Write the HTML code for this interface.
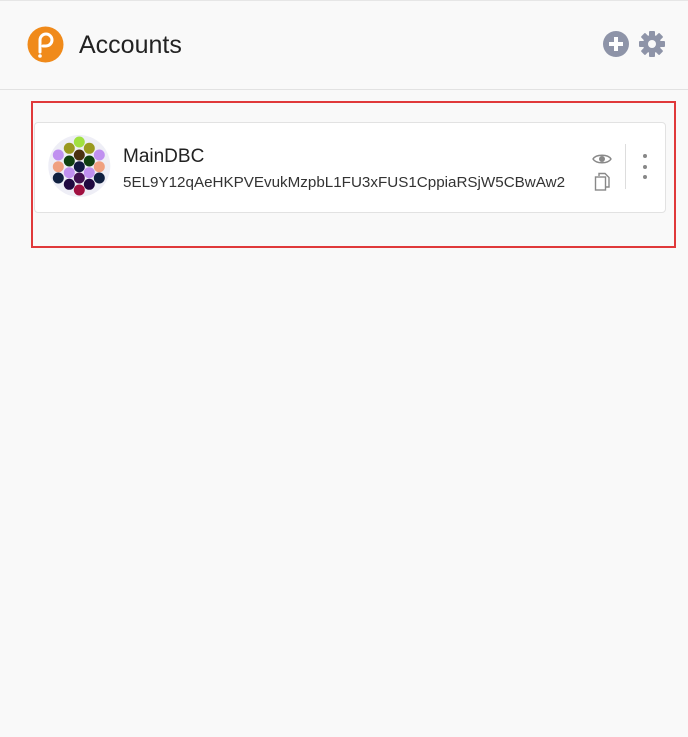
<!DOCTYPE html><html><head><style>
body{margin:0;width:688px;height:737px;background:#f9f9f9;font-family:"Liberation Sans",sans-serif;position:relative;overflow:hidden;color:#222}
.hdr{position:absolute;left:0;top:0;width:688px;height:90px;border-top:1px solid #e6e6e6;border-bottom:1px solid #e2e2e2;box-sizing:border-box}
.title{position:absolute;left:79px;top:31px;font-size:25px;color:#222}
.red{position:absolute;left:31px;top:101px;width:645px;height:147px;border:2px solid #e0393b;box-sizing:border-box}
.card{position:absolute;left:34px;top:122px;width:632px;height:91px;background:#fff;border:1px solid #e2e2e2;border-radius:4px;box-sizing:border-box}
.name{position:absolute;left:123px;top:146px;font-size:19px}
.addr{position:absolute;left:123px;top:174px;font-size:15.2px;color:#333}
</style></head><body>
<div class="hdr"></div>
<svg style="position:absolute;left:27px;top:26px" width="37" height="37" viewBox="0 0 37 37"><circle cx="18.5" cy="18.5" r="18" fill="#f08a1a"/><path d="M13 26V14a6 6 0 1 1 6 6h-3" fill="none" stroke="#fff" stroke-width="3" stroke-linecap="round"/><circle cx="13" cy="30" r="1.8" fill="#fff"/></svg>
<div class="title">Accounts</div>
<svg style="position:absolute;left:603px;top:31px" width="26" height="26" viewBox="0 0 26 26"><circle cx="13" cy="13" r="13" fill="#8e94a8"/><path d="M13 6v14M6 13h14" stroke="#fff" stroke-width="4"/></svg>
<svg style="position:absolute;left:639px;top:31px" width="26" height="26" viewBox="0 0 26 26"><g fill="#8e94a8"><circle cx="13" cy="13" r="9"/><g id="t"><rect x="10" y="0" width="6" height="6" rx="1"/><rect x="10" y="20" width="6" height="6" rx="1"/></g><use href="#t" transform="rotate(45 13 13)"/><use href="#t" transform="rotate(90 13 13)"/><use href="#t" transform="rotate(135 13 13)"/></g><circle cx="13" cy="13" r="4" fill="#f9f9f9"/></svg>
<div class="red"></div>
<div class="card"></div>
<svg style="position:absolute;left:47px;top:134px" width="64" height="64" viewBox="47 134 64 64"><circle cx="79.3" cy="166" r="31" fill="#eeeef6"/>
<g>
<circle cx="79.3" cy="142" r="5.5" fill="#a0e040"/>
<circle cx="69.3" cy="148.3" r="5.5" fill="#9a9a20"/><circle cx="89.3" cy="148.3" r="5.5" fill="#9a9a20"/>
<circle cx="79.3" cy="155" r="5.5" fill="#4a3010"/>
<circle cx="58.3" cy="155" r="5.5" fill="#c090f0"/><circle cx="99.3" cy="155" r="5.5" fill="#c090f0"/>
<circle cx="69.3" cy="161" r="5.5" fill="#104010"/><circle cx="89.3" cy="161" r="5.5" fill="#104010"/>
<circle cx="58.3" cy="166.7" r="5.5" fill="#f0a080"/><circle cx="99.3" cy="166.7" r="5.5" fill="#f0a080"/>
<circle cx="79.3" cy="166.7" r="5.5" fill="#101840"/>
<circle cx="69.3" cy="172.7" r="5.5" fill="#c090f0"/><circle cx="89.3" cy="172.7" r="5.5" fill="#c090f0"/>
<circle cx="58.3" cy="178" r="5.5" fill="#102040"/><circle cx="99.3" cy="178" r="5.5" fill="#102040"/>
<circle cx="79.3" cy="178" r="5.5" fill="#401050"/>
<circle cx="69.3" cy="184.3" r="5.5" fill="#200840"/><circle cx="89.3" cy="184.3" r="5.5" fill="#200840"/>
<circle cx="79.3" cy="190" r="5.5" fill="#a01040"/></g></svg>
<div class="name">MainDBC</div>
<div class="addr">5EL9Y12qAeHKPVEvukMzpbL1FU3xFUS1CppiaRSjW5CBwAw2</div>
<svg style="position:absolute;left:592px;top:152px" width="20" height="14" viewBox="0 0 20 14"><path d="M1 7C4 2 16 2 19 7C16 12 4 12 1 7Z" fill="none" stroke="#888" stroke-width="1.4"/><circle cx="10" cy="7" r="3" fill="#888"/></svg>
<svg style="position:absolute;left:594px;top:172px" width="18" height="20" viewBox="0 0 18 20"><path d="M5 4V1.5h6l4 4V15h-3" fill="none" stroke="#888" stroke-width="1.4"/><rect x="1.5" y="5" width="10" height="13" fill="none" stroke="#888" stroke-width="1.4"/></svg>
<div style="position:absolute;left:625px;top:144px;width:1px;height:45px;background:#ddd"></div>
<div style="position:absolute;left:643px;top:154px;width:4px;height:4px;border-radius:2px;background:#888"></div>
<div style="position:absolute;left:643px;top:165px;width:4px;height:4px;border-radius:2px;background:#888"></div>
<div style="position:absolute;left:643px;top:175px;width:4px;height:4px;border-radius:2px;background:#888"></div>
</body></html>
